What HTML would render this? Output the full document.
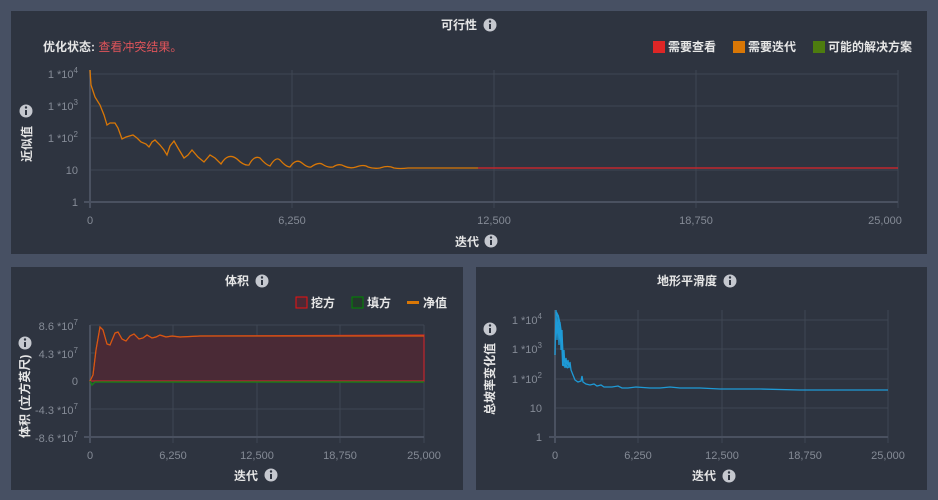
<!DOCTYPE html>
<html><head><meta charset="utf-8"><style>
html,body{margin:0;padding:0;background:#475063;width:938px;height:500px;overflow:hidden}
svg text{font-family:"Liberation Sans","Noto Sans CJK SC",sans-serif}
.t{fill:#e6e6e6;font-size:12px;font-weight:bold}
.k{fill:#858b96;font-size:11px}
.g{stroke:#3f4653;stroke-width:1}
.a{stroke:#4a5160;stroke-width:2}
</style></head><body>
<svg width="938" height="500" xmlns="http://www.w3.org/2000/svg">
<defs>
<g id="inf"><circle r="6.5" fill="#c5c8cf"/><rect x="-1" y="-1" width="2" height="5" fill="#2e3440"/><circle cy="-3.5" r="1.2" fill="#2e3440"/></g>
</defs>
<rect x="11" y="11" width="916" height="243" fill="#2e3440"/>
<rect x="11" y="267" width="452" height="223" fill="#2e3440"/>
<rect x="476" y="267" width="451" height="223" fill="#2e3440"/>

<!-- top -->
<text x="441" y="29" class="t">可行性</text><use href="#inf" x="490" y="25"/>
<text x="43" y="51" class="t">优化状态: <tspan fill="#e0545a" font-weight="normal">查看冲突结果。</tspan></text>
<rect x="653" y="41" width="12" height="12" fill="#dd2626"/><text x="668" y="51" class="t">需要查看</text>
<rect x="733" y="41" width="12" height="12" fill="#d97706"/><text x="748" y="51" class="t">需要迭代</text>
<rect x="813" y="41" width="12" height="12" fill="#4d7c0f"/><text x="828" y="51" class="t">可能的解决方案</text>
<g class="g"><line x1="90" y1="74" x2="898" y2="74"/><line x1="90" y1="106" x2="898" y2="106"/><line x1="90" y1="138" x2="898" y2="138"/><line x1="90" y1="170" x2="898" y2="170"/>
<line x1="292" y1="70" x2="292" y2="208"/><line x1="494" y1="70" x2="494" y2="208"/><line x1="696" y1="70" x2="696" y2="208"/><line x1="898" y1="70" x2="898" y2="208"/></g>
<g class="a"><line x1="84" y1="202" x2="898" y2="202"/><line x1="90" y1="70" x2="90" y2="208"/></g>
<g class="k" text-anchor="end"><text x="78" y="78">1 *10<tspan font-size="8" dy="-5">4</tspan></text><text x="78" y="110">1 *10<tspan font-size="8" dy="-5">3</tspan></text><text x="78" y="142">1 *10<tspan font-size="8" dy="-5">2</tspan></text><text x="78" y="174">10</text><text x="78" y="206">1</text></g>
<g class="k" text-anchor="middle"><text x="90" y="224">0</text><text x="292" y="224">6,250</text><text x="494" y="224">12,500</text><text x="696" y="224">18,750</text><text x="885" y="224">25,000</text></g>
<text x="455" y="246" class="t">迭代</text><use href="#inf" x="491" y="241"/>
<text transform="translate(31,162) rotate(-90)" class="t">近似值</text><use href="#inf" x="26" y="111"/>
<path d="M478,168 L898,168" stroke="#c0262d" stroke-width="1.5" fill="none"/>
<path d="M90,70 L91,85 L95,97 L100,105 L104,115 L107,125 L110,123 L115,123 L118,128 L122,139 L126,137 L133,135 L137,138 L141,142 L146,144 L149,147 L152,142 L155,140 L160,145 L164,150 L167,155 L170,146 L174,141 L178,148 L184,158 L188,155 L192,150 L198,157 L204,162 L210,155 L215,158 L221,164 Q228,152 237,159 Q244,166 249,165 Q254,155 260,158 Q266,165 270,166 Q276,156 280,160 Q286,167 290,167 Q296,158 302,163 Q308,168 311,167 Q318,162 322,164 Q328,168 333,167 Q339,163 344,166 Q350,169 356,167 Q364,164 368,167 Q374,169 380,168 Q388,165 394,168 Q400,169 408,168 L478,168" stroke="#d97706" stroke-width="1.3" fill="none"/>

<!-- bottom left -->
<text x="225" y="285" class="t">体积</text><use href="#inf" x="262" y="281"/>
<rect x="296" y="297" width="11" height="11" fill="#4a2a36" stroke="#e11" stroke-width="1"/><text x="311" y="307" class="t">挖方</text>
<rect x="352" y="297" width="11" height="11" fill="#24382c" stroke="#080" stroke-width="1"/><text x="367" y="307" class="t">填方</text>
<rect x="407" y="301" width="12" height="3" fill="#d97706"/><text x="423" y="307" class="t">净值</text>
<g class="g"><line x1="90" y1="325" x2="424" y2="325"/><line x1="90" y1="353" x2="424" y2="353"/><line x1="90" y1="409" x2="424" y2="409"/><line x1="90" y1="437" x2="424" y2="437"/>
<line x1="173" y1="325" x2="173" y2="443"/><line x1="257" y1="325" x2="257" y2="443"/><line x1="340" y1="325" x2="340" y2="443"/><line x1="424" y1="325" x2="424" y2="443"/></g>
<g class="a"><line x1="90" y1="325" x2="90" y2="443"/><line x1="84" y1="437" x2="424" y2="437"/></g>
<g class="k" text-anchor="end"><text x="78" y="330">8.6 *10<tspan font-size="8" dy="-5">7</tspan></text><text x="78" y="358">4.3 *10<tspan font-size="8" dy="-5">7</tspan></text><text x="78" y="385">0</text><text x="78" y="414">-4.3 *10<tspan font-size="8" dy="-5">7</tspan></text><text x="78" y="442">-8.6 *10<tspan font-size="8" dy="-5">7</tspan></text></g>
<g class="k" text-anchor="middle"><text x="90" y="459">0</text><text x="173" y="459">6,250</text><text x="257" y="459">12,500</text><text x="340" y="459">18,750</text><text x="424" y="459">25,000</text></g>
<text x="234" y="480" class="t">迭代</text><use href="#inf" x="271" y="475"/>
<text transform="translate(29,438) rotate(-90)" class="t">体积 (立方英尺)</text><use href="#inf" x="25" y="343"/>
<path d="M90,381 L93,375 L96,350 L100,327 L103,330 L107,344 L110,345 L115,333 L118,332 L122,339 L126,341 L130,336 L134,334 L139,339 L143,338 L147,335 L152,338 L156,337 L160,335 L166,337 L172,336 L180,337 L200,336 L424,335 L424,381 Z" fill="#4a2a36" stroke="#c0262d" stroke-width="1.2"/>
<path d="M90,381 L93,375 L96,350 L100,327 L103,330 L107,344 L110,345 L115,333 L118,332 L122,339 L126,341 L130,336 L134,334 L139,339 L143,338 L147,335 L152,338 L156,337 L160,335 L166,337 L172,336 L180,337 L200,336 L424,336" fill="none" stroke="#d65a10" stroke-width="1.2"/>
<path d="M90,381 L92,385 L95,382 L424,382" stroke="#1a7a1a" stroke-width="1.5" fill="none"/>

<!-- bottom right -->
<text x="657" y="285" class="t">地形平滑度</text><use href="#inf" x="730" y="281"/>
<g class="g"><line x1="555" y1="320" x2="888" y2="320"/><line x1="555" y1="349" x2="888" y2="349"/><line x1="555" y1="379" x2="888" y2="379"/><line x1="555" y1="408" x2="888" y2="408"/>
<line x1="638" y1="310" x2="638" y2="443"/><line x1="722" y1="310" x2="722" y2="443"/><line x1="805" y1="310" x2="805" y2="443"/><line x1="888" y1="310" x2="888" y2="443"/></g>
<g class="a"><line x1="555" y1="310" x2="555" y2="443"/><line x1="549" y1="437" x2="888" y2="437"/></g>
<g class="k" text-anchor="end"><text x="542" y="324">1 *10<tspan font-size="8" dy="-5">4</tspan></text><text x="542" y="353">1 *10<tspan font-size="8" dy="-5">3</tspan></text><text x="542" y="383">1 *10<tspan font-size="8" dy="-5">2</tspan></text><text x="542" y="412">10</text><text x="542" y="441">1</text></g>
<g class="k" text-anchor="middle"><text x="555" y="459">0</text><text x="638" y="459">6,250</text><text x="722" y="459">12,500</text><text x="805" y="459">18,750</text><text x="888" y="459">25,000</text></g>
<text x="692" y="480" class="t">迭代</text><use href="#inf" x="729" y="476"/>
<text transform="translate(494,415) rotate(-90)" class="t">总坡率变化值</text><use href="#inf" x="490" y="329"/>
<path d="M555,355 L556,310 L557,340 L558,315 L559,345 L560,322 L561,350 L562,330 L563,365 L564,350 L565,368 L566,358 L567,366 L568,360 L569,368 L570,362 L571,370 L573,375 L575,380 L578,382 L581,381 L582,376 L583,382 L586,384 L590,385 L594,384 L597,386 L601,385 L604,387 L612,387 L618,386 L622,388 L628,388 L636,387 L650,388 L660,388 L670,387 L680,388 L700,388 L720,389 L760,389 L800,390 L888,390" stroke="#1e9ad6" stroke-width="1.3" fill="none"/>
<path d="M556,312 L558,316 L560,325 L562,340 L563,365 L566,366 L568,368" stroke="#1e9ad6" stroke-width="2" fill="none"/>
</svg>
</body></html>
